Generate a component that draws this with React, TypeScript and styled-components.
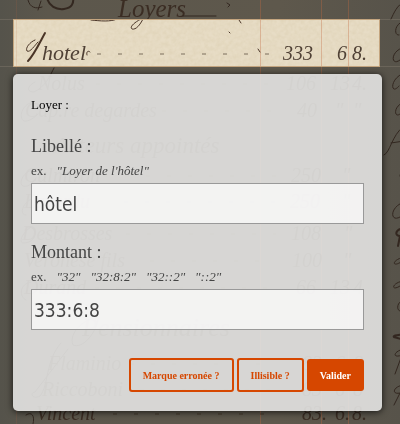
import React, { useState } from "react";
import styled, { createGlobalStyle, css } from "styled-components";

const serif = `"Liberation Serif", "Times New Roman", serif`;
const accent = "#d64700";

const GlobalStyle = createGlobalStyle`
  *, *::before, *::after { box-sizing: border-box; }
  body { margin: 0; background: #5a554b; font-family: ${serif}; }
`;

const Page = styled.main`
  position: relative;
  display: flex;
  flex-direction: column;
  gap: 7px;
  min-height: 100vh;
  padding: 19px 18px 13px 13px;
  overflow: hidden;
  background: linear-gradient(90deg, #55534b, #5c574c 12%, #5e584c 70%, #57534a);
`;

const Backdrop = styled.svg`
  position: absolute;
  inset: 0;
  width: 100%;
  height: 100%;
`;

const Excerpt = styled.section`
  position: relative;
  height: 48px;
  margin-right: 2px;
  background: #e7dcc5;
  outline: 1px solid #c4a57f;
  outline-offset: -1px;
`;

const ExcerptDrawing = styled.svg`
  display: block;
  width: 100%;
  height: 100%;
`;

const Card = styled.form`
  position: relative;
  display: flex;
  flex-direction: column;
  padding: 23px 18px 19px;
  border-radius: 5px;
  background: rgba(230, 230, 229, 0.89);
  box-shadow: 0 1px 7px rgba(0, 0, 0, 0.75);
`;

const Title = styled.h1`
  margin: 0 0 21px;
  font-size: 13px;
  line-height: 16px;
  font-weight: 400;
  color: #000;
`;

const Fields = styled.div`
  display: flex;
  flex-direction: column;
  gap: 16px;
`;

const Field = styled.div`
  display: flex;
  flex-direction: column;
`;

const Label = styled.label`
  margin-bottom: 5px;
  font-size: 18px;
  line-height: 24px;
  color: #444;
`;

const Hint = styled.p`
  display: flex;
  gap: 10px;
  margin: 0 0 4px;
  font-size: 13px;
  line-height: 16px;
  color: #444;
`;

const TextInput = styled.input`
  width: 100%;
  height: 41px;
  padding: 0 2px;
  border: 1px solid #999;
  border-radius: 0;
  outline: none;
  background: rgba(255, 255, 255, 0.7);
  color: #444;
  font-family: "DejaVu Sans Condensed", "Noto Sans", sans-serif;
  font-size: 19px;
`;

const Actions = styled.div`
  display: flex;
  flex-wrap: wrap;
  justify-content: flex-end;
  align-items: center;
  gap: 3px;
  margin-top: 28px;
`;

const Button = styled.button<{ $primary?: boolean }>`
  padding: 0 12px;
  height: 34px;
  border: 2px solid ${accent};
  border-radius: 3px;
  background: transparent;
  color: ${accent};
  font-family: ${serif};
  font-size: 10px;
  font-weight: 700;
  cursor: pointer;
  ${({ $primary }) =>
    $primary &&
    css`
      height: 32px;
      padding: 0 13px;
      border: 0;
      background: ${accent};
      color: #fff;
    `}
`;

type Entry = { y: number; name: string; x: number; size?: number; leader?: number; sums?: [number, string][] };

const excerptEntry: Entry = {
  y: 60,
  name: "hotel",
  x: 42,
  size: 22,
  leader: 97,
  sums: [[283, "333"], [337, "6"], [352, "8."]],
};

const entries: Entry[] = [
  { y: 17, name: "Loyers", x: 118, size: 25 },
  { y: 90, name: "Nolus", x: 38, leader: 96, sums: [[286, "106"], [330, "13"], [352, "4."]] },
  { y: 117, name: "Cap.re degardes", x: 25, leader: 162, sums: [[297, "40"], [335, "\""], [353, "\""]] },
  { y: 153, name: "Acteurs appointés", x: 54, size: 23 },
  { y: 182, name: "Culmiron", x: 24, leader: 104, sums: [[291, "250"], [342, "\""]] },
  { y: 208, name: "Laverdu", x: 24, leader: 124, sums: [[290, "250"], [342, "\""]] },
  { y: 240, name: "Desbrosses", x: 22, leader: 126, sums: [[291, "108"], [344, "\""]] },
  { y: 267, name: "Veronese fils", x: 24, leader: 150, sums: [[292, "100"], [343, "\""]] },
  { y: 294, name: "Durand", x: 24, leader: 95, sums: [[296, "66"], [330, "13"], [353, "4"]] },
  { y: 336, name: "Pensionnaires", x: 82, size: 26 },
  { y: 370, name: "Flaminio", x: 48, leader: 130, sums: [[302, "83"], [335, "6"], [353, "8"]] },
  { y: 396, name: "Riccoboni", x: 42, leader: 140, sums: [[302, "83"], [335, "6"], [353, "8"]] },
  { y: 420, name: "Vincent", x: 36, leader: 113, sums: [[302, "83."], [335, "6."], [352, "8."]] },
];

const flourishes = [
  "M28 0c2 8 8 9 14 7M41 1l-3 9",
  "M54 68c-4 8-9 19-20 24-8 0-7-6 1-10",
  "M34 102c-12 1-16 16-10 19 5 1 11-4 14-7",
  "M33 170c-10 1-15 14-10 16 6 2 11-5 13-8M31 199c-9 5-12 16-5 16",
  "M31 227c-8 5-13 15-8 16 12 0 15-11 9-15-3-2-6 0-7 2",
  "M31 282c-12 2-12 15-5 18",
  "M99 318c-14-1-31 15-26 27 9 4 22-10 25-25M61 343c-16 18-12 42-21 53-7 4-11-3-5-4l33-43",
  "M26 415c6-4 9 1 7 9",
  "M227 3l3 2-2 2M183 16h33",
  "M404 2c-7 3-10 11-13 17M402 22c-8 3-8 14-3 13M402 48c-12 4-11 19-2 12M402 74c-13 6-11 22-3 12M402 103c-10 5-7 17-1 10",
  "M403 127c-11 8-13 26-19 28M404 141l-13 2M404 158l-4 18M404 202c-15 5-14 21-4 15M404 257c-13 3-12 11-3 5M403 281c-12 2-12 11-3 5M403 300c-8 3-6 14-1 10M404 349c-11 2-12 10-2 6l-7 19M403 385c-11 2-11 10-3 8l-6 12",
];

const heavyFlourishes = [
  "M47-2c2 8 9 12 17 11s10-6 9-11",
  "M404 228c-10 2-9 8-4 8l-2 10",
  "M405 334c-3 1-13 1-11 3l10 3",
];

const excerptFlourishes = [
  "M35 40c-5 2-10 8-8 11 3 2 8-6 11-9",
  "M90 52c-2-2-4 0-3 3",
  "M117 19c-6 3-17 2-26 1M143 19c-3 6-7 11-11 10-3-2 3-7 9-10",
  "M239 20l2 3M229 32l1 1M258 49l2 3",
];

function ColumnRules() {
  return (
    <g stroke="#c46a42" opacity="0.35">
      <path d="M260.500 0V424M321.500 0V424M348.500 0V424" />
      <path d="M16.500 0V424" opacity="0.4" />
    </g>
  );
}

function Line({ entry }: { entry: Entry }) {
  const { x, y, name, size = 20, leader, sums = [] } = entry;
  return (
    <g fill="#35261d" fontFamily={serif} fontStyle="italic" opacity="0.85">
      <text x={x} y={y} fontSize={size}>
        {name}
      </text>
      {leader && <path d={`M${leader} ${y - 6}H276`} stroke="#35261d" strokeDasharray="4 17" opacity="0.7" />}
      {sums.map(([left, sum]) => (
        <text key={left} x={left} y={y} fontSize="20">
          {sum}
        </text>
      ))}
    </g>
  );
}

type FieldRowProps = {
  id: string;
  label: string;
  examples: string[];
  value: string;
  onChange: (value: string) => void;
};

function FieldRow({ id, label, examples, value, onChange }: FieldRowProps) {
  return (
    <Field>
      <Label htmlFor={id}>{label}</Label>
      <Hint id={`${id}-hint`}>
        <span>ex.</span>
        {examples.map((example) => (
          <em key={example}>{example}</em>
        ))}
      </Hint>
      <TextInput
        id={id}
        type="text"
        aria-describedby={`${id}-hint`}
        value={value}
        onChange={(event) => onChange(event.target.value)}
      />
    </Field>
  );
}

export default function App() {
  const [wording, setWording] = useState("hôtel");
  const [amount, setAmount] = useState("333:6:8");

  return (
    <>
      <GlobalStyle />
      <Page>
        <Backdrop aria-hidden="true">
          <path d="M0 19.500H400M0 66.500H400" stroke="#777064" opacity="0.6" />
          <ColumnRules />
          <g fill="none" stroke="#2d2019" strokeLinecap="round" opacity="0.85">
            {flourishes.map((d) => (
              <path key={d} d={d} />
            ))}
            {heavyFlourishes.map((d) => (
              <path key={d} d={d} strokeWidth="2" />
            ))}
          </g>
          {entries.map((entry) => (
            <Line key={entry.y} entry={entry} />
          ))}
        </Backdrop>
        <Excerpt aria-label="Ligne du registre">
          <ExcerptDrawing aria-hidden="true">
            <filter id="grain">
              <feTurbulence type="fractalNoise" baseFrequency="0.25" numOctaves="3" />
              <feColorMatrix values="0 0 0 0 0.5  0 0 0 0 0.4  0 0 0 0 0.2  0.5 0 0 0 -0.15" />
            </filter>
            <rect width="100%" height="100%" filter="url(#grain)" opacity="0.5" />
            <g transform="translate(-13 -19)">
              <ColumnRules />
              <g fill="none" stroke="#4a3527" strokeLinecap="round">
                {excerptFlourishes.map((d) => (
                  <path key={d} d={d} />
                ))}
                <path d="M45 33c-5 9-11 22-17 28" strokeWidth="2" />
              </g>
              <Line entry={excerptEntry} />
            </g>
          </ExcerptDrawing>
        </Excerpt>
        <Card onSubmit={(event) => event.preventDefault()}>
          <Title>Loyer :</Title>
          <Fields>
            <FieldRow
              id="libelle"
              label="Libellé :"
              examples={['"Loyer de l\'hôtel"']}
              value={wording}
              onChange={setWording}
            />
            <FieldRow
              id="montant"
              label="Montant :"
              examples={['"32"', '"32:8:2"', '"32::2"', '"::2"']}
              value={amount}
              onChange={setAmount}
            />
          </Fields>
          <Actions>
            <Button type="button">Marque erronée ?</Button>
            <Button type="button">Illisible ?</Button>
            <Button type="submit" $primary>
              Valider
            </Button>
          </Actions>
        </Card>
      </Page>
    </>
  );
}
